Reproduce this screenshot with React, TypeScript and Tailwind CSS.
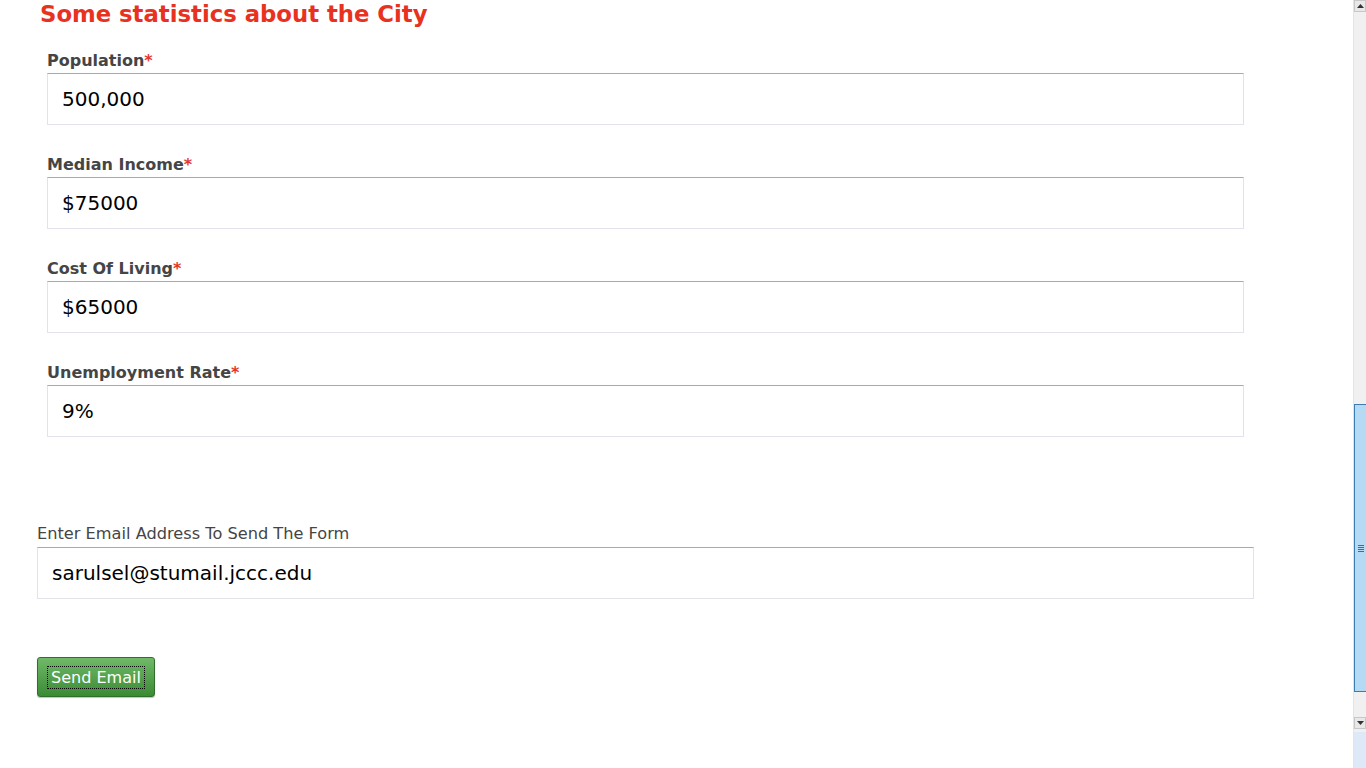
import React from "react";

const font = { fontFamily: '"DejaVu Sans", Verdana, sans-serif' };

function Field({ label, value }: { label: string; value: string }) {
  return (
    <div className="flex flex-col">
      <div className="text-[16px] leading-[20px] font-bold text-[#454545]">
        {label}
        <span className="text-[#e2372a]">*</span>
      </div>
      <div className="mt-[2px] h-[52px] w-[1197px] border border-[#e2e3ea] border-t-[#a9a9a9] bg-white flex items-center pl-[14px] text-[20px] text-black">
        {value}
      </div>
    </div>
  );
}

export default function App() {
  return (
    <div className="flex h-[768px] w-[1366px] bg-white overflow-hidden" style={font}>
      <main className="flex-1 flex flex-col">
        <h2 className="pl-[40px] text-[22.75px] leading-[28px] font-bold text-[#e8321f]">
          Some statistics about the City
        </h2>
        <div className="pl-[47px] mt-[23px] flex flex-col gap-[30px]">
          <Field label="Population" value="500,000" />
          <Field label="Median Income" value="$75000" />
          <Field label="Cost Of Living" value="$65000" />
          <Field label="Unemployment Rate" value="9%" />
        </div>
        <div className="pl-[37px] mt-[87px] flex flex-col">
          <div className="text-[16.2px] leading-[20px] text-[#454545]">
            Enter Email Address To Send The Form
          </div>
          <div className="mt-[3px] h-[52px] w-[1217px] border border-[#e2e3ea] border-t-[#a9a9a9] bg-white flex items-center pl-[14px] text-[20px] text-black">
            sarulsel@stumail.jccc.edu
          </div>
          <div className="mt-[58px]">
            <button className="h-[40px] w-[118px] rounded-[3px] border border-[#2f6e2b] bg-gradient-to-b from-[#70b968] to-[#3a8b34] flex items-center justify-center shadow-[0_1px_1px_rgba(0,0,0,0.25)]">
              <span className="border border-dotted border-black px-[3px] text-[16px] leading-[21px] text-white">
                Send Email
              </span>
            </button>
          </div>
        </div>
      </main>
      <aside className="w-[13px] flex flex-col bg-[#f0f0f0] border-l border-[#e4e4e4]">
        <div className="h-[12px] bg-[#e8e8e8] border border-[#c8c8c8] flex items-center justify-center">
          <svg width="7" height="4" viewBox="0 0 7 4">
            <path d="M0 4 L3.5 0 L7 4 Z" fill="#333" />
          </svg>
        </div>
        <div className="h-[392px]" />
        <div className="h-[288px] bg-[#b5daf4] border-l border-[#3b7db3] border-t border-b border-[#3b7db3] flex items-center justify-center">
          <div className="flex flex-col gap-[1px]">
            <div className="h-[1px] w-[6px] bg-[#3a6f98]" />
            <div className="h-[1px] w-[6px] bg-[#3a6f98]" />
            <div className="h-[1px] w-[6px] bg-[#3a6f98]" />
            <div className="h-[1px] w-[6px] bg-[#3a6f98]" />
          </div>
        </div>
        <div className="h-[25px]" />
        <div className="h-[12px] bg-[#e8e8e8] border border-[#c8c8c8] flex items-center justify-center">
          <svg width="7" height="4" viewBox="0 0 7 4">
            <path d="M0 0 L3.5 4 L7 0 Z" fill="#333" />
          </svg>
        </div>
        <div className="flex-1 bg-[#dde9f7] mt-[3px]" />
      </aside>
    </div>
  );
}
